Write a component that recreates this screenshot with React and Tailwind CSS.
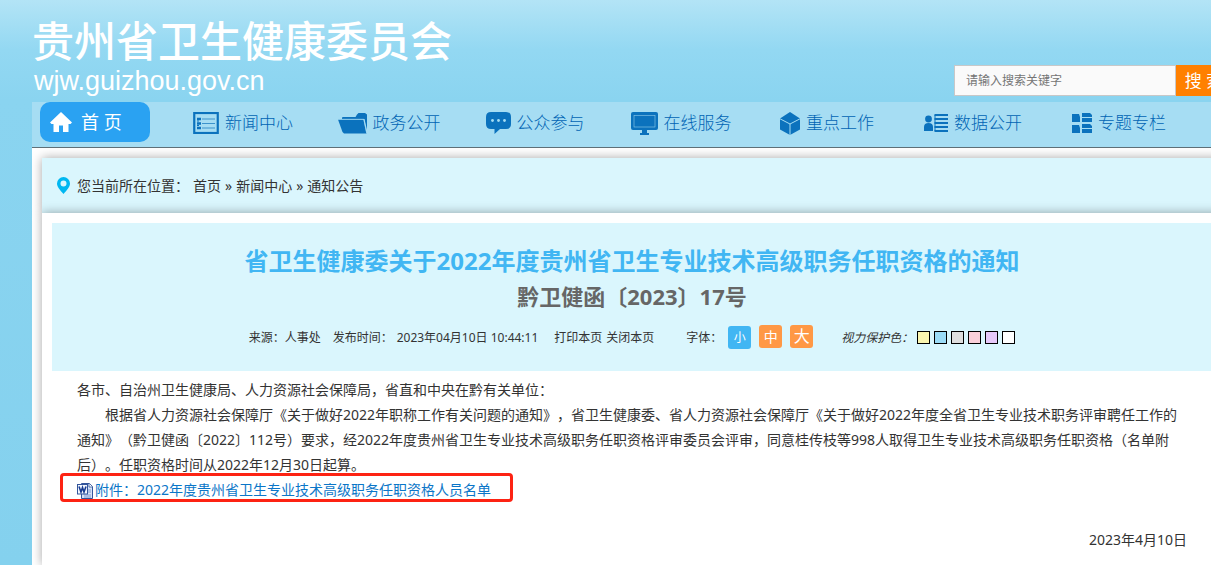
const HomeIcon = () => (
  <svg viewBox="0 0 22 20" className="h-5 w-[22px]" fill="currentColor" aria-hidden="true">
    <path d="M11 0 22 10.5 20.5 12H18.5V20H13V13.5H9V20H3.500V12H1.500L0 10.500Z" />
  </svg>
)

const NewsIcon = () => (
  <svg viewBox="0 0 26 22" className="h-[22px] w-[26px]" fill="none" stroke="currentColor" aria-hidden="true">
    <rect x="1.250" y="1" width="23.500" height="20" strokeWidth="2.200" />
    <path d="M9 7h13M9 11.500h13M9 16h13" stroke="#3c93cc" strokeWidth="1.200" />
    <path d="M4 7h4M4 11.500h4M4 16h4" strokeWidth="2.600" />
    <path d="M4 9h2M4 13.500h2" strokeWidth="1" />
  </svg>
)

const FolderIcon = () => (
  <svg viewBox="0 0 29 21" className="h-[21px] w-[29px]" fill="currentColor" aria-hidden="true">
    <path d="M4 6V4.500L5 4H17.500L19 1.500 20.500 0H27L29 1.500V17L26.500 6Z" />
    <path d="M0 6.500H25.500L28.500 20.500H6L4.500 19Z" />
    <path d="M0 6.300H25.800L28.600 20" fill="none" stroke="#a6ddf3" strokeWidth=".7" />
  </svg>
)

const ChatIcon = () => (
  <svg viewBox="0 0 25 22" className="h-[22px] w-[25px]" fill="currentColor" aria-hidden="true">
    <path d="M5 0H20Q25 0 25 5V12Q25 17 20 17H14L8.500 22V17H5Q0 17 0 12V5Q0 0 5 0Z" />
    <g fill="#a6ddf3">
      <circle cx="6.500" cy="8.500" r="1.400" />
      <circle cx="12.500" cy="8.500" r="1.400" />
      <circle cx="18.500" cy="8.500" r="1.400" />
    </g>
  </svg>
)

const MonitorIcon = () => (
  <svg viewBox="0 0 27 23" className="h-[23px] w-[27px]" fill="currentColor" aria-hidden="true">
    <rect width="27" height="18" rx="2" />
    <rect x="3" y="3.500" width="21" height="11.500" fill="none" stroke="#8fcbe9" strokeWidth=".6" />
    <path d="M11 18H16V21H18V23H9V21H11Z" />
  </svg>
)

const CubeIcon = () => (
  <svg viewBox="0 0 20 23" className="h-[23px] w-5" fill="currentColor" aria-hidden="true">
    <path d="M10 0 20 6.500V17.500L10 23 0 17.500V6.500Z" />
    <path d="M0 6.800 10 12 20 6.800M10 12V23" fill="none" stroke="#a6ddf3" strokeWidth="1" />
  </svg>
)

const DataIcon = () => (
  <svg viewBox="0 0 24 18" className="h-[18px] w-6" fill="currentColor" aria-hidden="true">
    <circle cx="4.500" cy="5" r="3.400" />
    <path d="M0 17V13Q0 9 4.500 9T9 13V17Z" />
    <path d="M10.500 1H24M10.500 5H24M10.500 9H24M10.500 13H24M10.500 17H24" stroke="currentColor" strokeWidth="1.800" />
    <path d="M11 1V17" stroke="currentColor" />
  </svg>
)

const GridIcon = () => (
  <svg viewBox="0 0 20 20" className="h-5 w-5" fill="currentColor" aria-hidden="true">
    <path d="M0 1H7L8 4V9H0ZM0 12H7L8 15V20H0Z" />
    <path d="M10 0H18L20 2V4H10ZM10 5H20V9H10ZM10 11H18L20 13V15H10ZM10 16H20V20H10Z" />
  </svg>
)

const PinIcon = () => (
  <svg viewBox="0 0 13 17" className="h-[17px] w-[13px]" aria-hidden="true">
    <path
      fill="#00b7f1"
      fillRule="evenodd"
      d="M6.500 0A6.500 6.500 0 0 0 0 6.500C0 10 3 13 6.500 17 10 13 13 10 13 6.500A6.500 6.500 0 0 0 6.500 0ZM6.500 3.600A3 3 0 1 1 6.500 9.600 3 3 0 0 1 6.500 3.600Z"
    />
  </svg>
)

const WordIcon = () => (
  <svg viewBox="0 0 16 16" className="mr-[2px] inline-block h-4 w-4 align-[-4px]" aria-hidden="true">
    <path d="M4.500 .5H12.500L15.500 3.500V15.500H4.500Z" fill="#d5e2f7" stroke="#33559b" />
    <path d="M12 .5V4H15.500" fill="#fff" stroke="#33559b" strokeWidth=".8" />
    <path d="M11 7H14M11 9H14M7 12H14M7 14H14" stroke="#6b8cc9" strokeWidth=".8" />
    <rect x=".5" y="1.500" width="10" height="9.500" fill="#f4f8ff" stroke="#33559b" />
    <path d="M2 3.500 4 9 5.500 4.500 7 9 9 3.500" fill="none" stroke="#183c91" strokeWidth="1.600" />
  </svg>
)

const navItems = [
  { label: '新闻中心', icon: NewsIcon },
  { label: '政务公开', icon: FolderIcon },
  { label: '公众参与', icon: ChatIcon },
  { label: '在线服务', icon: MonitorIcon },
  { label: '重点工作', icon: CubeIcon },
  { label: '数据公开', icon: DataIcon },
  { label: '专题专栏', icon: GridIcon },
]

const swatches = [
  { name: '黄色', color: 'bg-[#faf6b0]' },
  { name: '蓝色', color: 'bg-[#9bdcf7]' },
  { name: '灰色', color: 'bg-[#dedede]' },
  { name: '粉色', color: 'bg-[#fad0da]' },
  { name: '紫色', color: 'bg-[#e6c9fa]' },
  { name: '白色', color: 'bg-white' },
]

function Header() {
  return (
    <header>
      <div className="flex h-[102px] items-start justify-between">
        <div className="pt-4 text-white">
          <p className="text-[42px] leading-[50px] font-medium">贵州省卫生健康委员会</p>
          <p className="pl-[2px] font-['Liberation_Sans',sans-serif] text-[27px] leading-[30px]">wjw.guizhou.gov.cn</p>
        </div>
        <form className="mt-[65px] flex h-[31px]" onSubmit={(e) => e.preventDefault()}>
          <input
            type="text"
            aria-label="搜索"
            placeholder="请输入搜索关键字"
            className="w-[222px] border border-[#c8c8c8] bg-[#fafafa] px-[11px] text-xs text-[#333] outline-none placeholder:text-[#757575]"
          />
          <button type="submit" className="w-14 bg-[#ff8000] text-[17px] leading-[30px] text-white">
            搜 索
          </button>
        </form>
      </div>

      <nav className="flex h-[46px] items-start border-b border-[#5f7078] bg-[#a6ddf3] pl-2">
        <a href="#home" className="flex h-10 w-[110px] items-center gap-[9px] rounded-[10px] bg-[#2aa2f2] pl-[10px] text-lg text-white">
          <HomeIcon />
          首 页
        </a>
        <div className="mr-10 ml-5 grid h-[42px] flex-1 grid-cols-7">
          {navItems.map((item) => (
            <a
              key={item.label}
              href="#nav"
              className="flex items-center justify-center gap-[6px] text-[17px] font-light whitespace-nowrap text-[#0064b4]"
            >
              <span className="text-[#0b72bd]">
                <item.icon />
              </span>
              {item.label}
            </a>
          ))}
        </div>
      </nav>
    </header>
  )
}

function ArticleMeta() {
  return (
    <div className="mt-3 flex items-baseline justify-center text-xs leading-[23px] whitespace-nowrap">
      <span>来源：人事处</span>
      <span className="ml-3">发布时间：</span>
      <span className="ml-1">2023年04月10日 10:44:11</span>
      <button type="button" className="ml-4">打印本页</button>
      <button type="button" className="ml-1">关闭本页</button>
      <span className="ml-8">字体：</span>
      <span className="ml-[6px] flex items-baseline gap-2 text-white">
        <button type="button" className="w-[23px] rounded-[3px] bg-[#41b6f3] text-xs leading-[23px]">小</button>
        <button type="button" className="w-[23px] rounded-[3px] bg-[#ff9845] text-sm leading-[23px]">中</button>
        <button type="button" className="w-[23px] rounded-[3px] bg-[#ff9845] text-base leading-[23px]">大</button>
      </span>
      <span className="ml-7 italic">视力保护色：</span>
      <span className="ml-1 flex gap-1 self-center">
        {swatches.map((s) => (
          <button key={s.name} type="button" aria-label={s.name} className={`h-[13px] w-[13px] border border-black ${s.color}`} />
        ))}
      </span>
    </div>
  )
}

export default function App() {
  return (
    <div className="min-h-screen overflow-hidden bg-[#87d3f0] bg-[linear-gradient(#b3e4f6_0px,#93d8f2_50px,#8ad4f0_100px,#84d1ee_565px)] bg-no-repeat pl-8 font-['Noto_Sans','Noto_Sans_CJK_SC',sans-serif] text-[#333] [text-spacing-trim:space-all]">
      <div className="-mr-[21px] flex min-h-screen flex-col">
        <Header />

        <main className="flex flex-1 flex-col bg-white px-[10px] pt-[10px]">
          <div className="flex h-[55px] items-center gap-1 bg-[#daf6fd] pl-[15px] text-sm shadow-[0_0_10px_rgba(0,0,0,0.35)]">
            <span className="mr-[3px]">
              <PinIcon />
            </span>
            <span>您当前所在位置：</span>
            <a href="#home">首页</a>»<a href="#news">新闻中心</a>»<a href="#notice">通知公告</a>
          </div>

          <article className="flex-1 bg-white px-[10px] pt-[10px] shadow-[0_0_10px_rgba(0,0,0,0.35)]">
            <div className="bg-[#daf6fd] pt-5 pb-[22px] text-center">
              <h1 className="text-2xl leading-9 font-bold text-[#41b6f3]">
                省卫生健康委关于2022年度贵州省卫生专业技术高级职务任职资格的通知
              </h1>
              <h2 className="text-[22px] leading-[34px] font-bold text-[#666]">黔卫健函〔2023〕17号</h2>
              <ArticleMeta />
            </div>

            <div className="px-[25px] pt-[6px] pb-3 text-sm leading-[25px]">
              <p>各市、自治州卫生健康局、人力资源社会保障局，省直和中央在黔有关单位：</p>
              <p className="indent-7">
                根据省人力资源社会保障厅《关于做好2022年职称工作有关问题的通知》，省卫生健康委、省人力资源社会保障厅《关于做好2022年度全省卫生专业技术职务评审聘任工作的通知》（黔卫健函〔2022〕112号）要求，经2022年度贵州省卫生专业技术高级职务任职资格评审委员会评审，同意桂传枝等998人取得卫生专业技术高级职务任职资格（名单附后）。任职资格时间从2022年12月30日起算。
              </p>
              <p>
                <a href="#attachment" className="relative inline-block text-[#0b76c8]">
                  <WordIcon />
                  附件：2022年度贵州省卫生专业技术高级职务任职资格人员名单
                  <span className="pointer-events-none absolute -top-1 -right-[22px] bottom-0 -left-[17px] rounded border-3 border-[#fd2313]" />
                </a>
              </p>
              <p className="mt-[25px] text-right">2023年4月10日</p>
            </div>
          </article>
        </main>
      </div>
    </div>
  )
}
